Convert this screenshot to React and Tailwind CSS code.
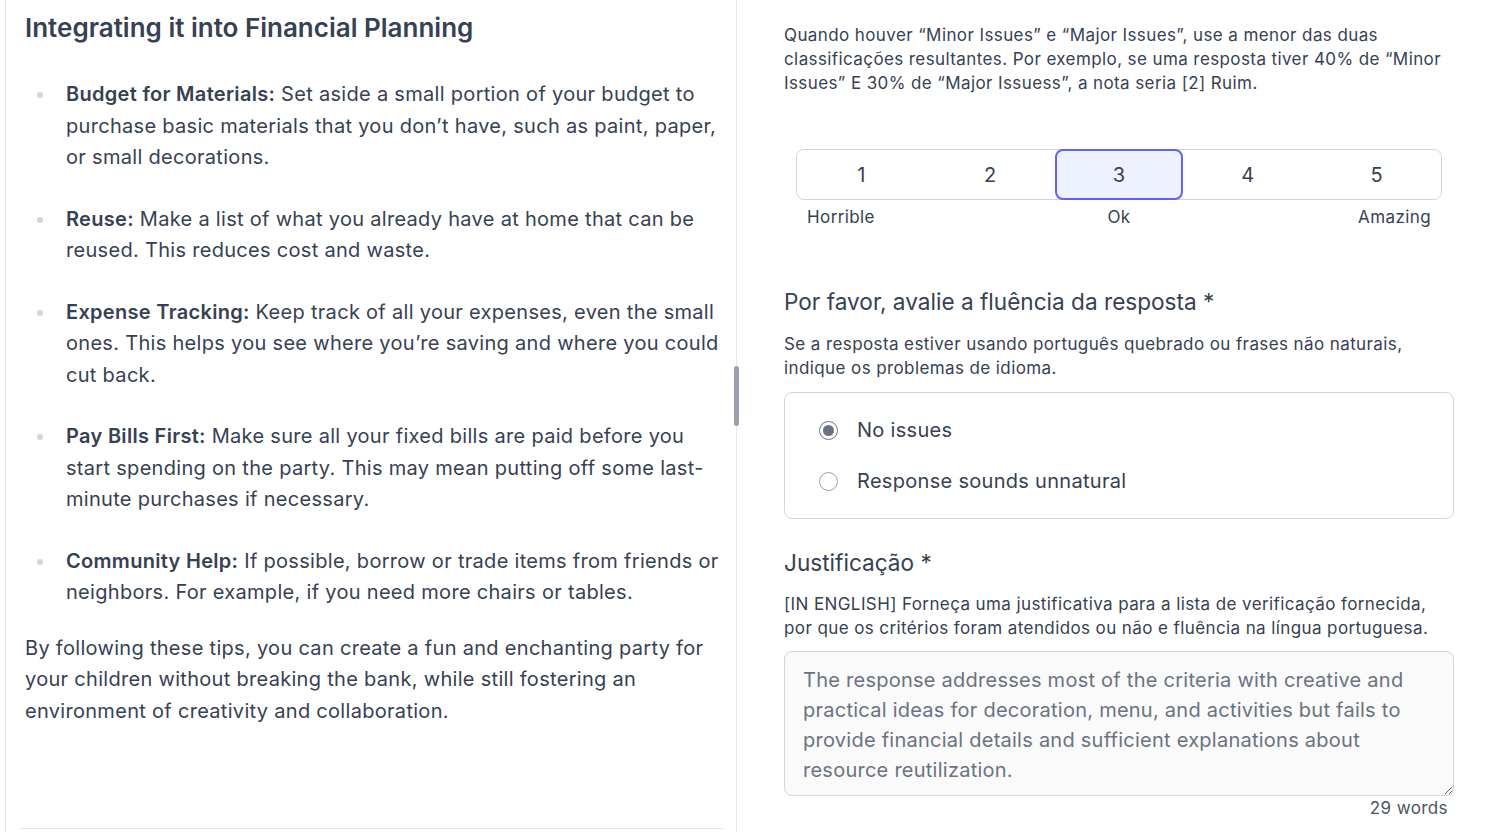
import React from "react";

const tips = [
  {
    title: "Budget for Materials:",
    body: " Set aside a small portion of your budget to purchase basic materials that you don’t have, such as paint, paper, or small decorations.",
  },
  {
    title: "Reuse:",
    body: " Make a list of what you already have at home that can be reused. This reduces cost and waste.",
  },
  {
    title: "Expense Tracking:",
    body: " Keep track of all your expenses, even the small ones. This helps you see where you’re saving and where you could cut back.",
  },
  {
    title: "Pay Bills First:",
    body: " Make sure all your fixed bills are paid before you start spending on the party. This may mean putting off some last-minute purchases if necessary.",
  },
  {
    title: "Community Help:",
    body: " If possible, borrow or trade items from friends or neighbors. For example, if you need more chairs or tables.",
  },
];

const Radio = ({ checked, label }) => (
  <label className="flex items-center gap-[19px] cursor-pointer">
    <span
      className={`w-[19px] h-[19px] rounded-full border flex items-center justify-center ${
        checked ? "border-gray-500" : "border-gray-400"
      }`}
    >
      {checked && <span className="w-[11px] h-[11px] rounded-full bg-gray-500" />}
    </span>
    <span className="text-[20px] leading-[24px] tracking-[0.3px] text-gray-700">{label}</span>
  </label>
);

export default function App() {
  const [rating, setRating] = React.useState(3);

  return (
    <div
      className="w-[1486px] h-[832px] overflow-hidden bg-white flex text-gray-700"
      style={{ fontFamily: "Inter, 'Noto Sans', sans-serif" }}
    >
      {/* left: response content */}
      <div className="relative ml-[5px] w-[732px] h-full border-x border-gray-200 flex flex-col">
        <div className="flex-1 overflow-hidden pl-[19px] pr-[14px]">
          <h3 className="text-[26px] font-semibold leading-[32px] mt-[12px] text-gray-700">
            Integrating it into Financial Planning
          </h3>
          <ul className="mt-[35px] flex flex-col gap-[30px]">
            {tips.map((t) => (
              <li key={t.title} className="flex text-[20px] leading-[31.5px] tracking-[0.3px]">
                <span className="w-[41px] shrink-0 pl-[12px] pt-[13px]">
                  <span className="block w-[6px] h-[6px] rounded-full bg-gray-300" />
                </span>
                <p>
                  <strong className="font-semibold">{t.title}</strong>
                  {t.body}
                </p>
              </li>
            ))}
          </ul>
          <p className="mt-[24px] text-[20px] leading-[31.5px] tracking-[0.3px]">
            By following these tips, you can create a fun and enchanting party for your children without
            breaking the bank, while still fostering an environment of creativity and collaboration.
          </p>
        </div>
        <div className="mx-[13px] mb-[3px] border-t border-gray-200" />
        <div className="absolute right-[-3px] top-[366px] w-[5px] h-[60px] rounded-full bg-gray-400" />
      </div>

      {/* right: evaluation form */}
      <div className="flex-1 pl-[47px] pr-[32px] pt-[23px]">
        <p className="text-[17px] leading-[24px] tracking-[0.4px] text-gray-700">
          Quando houver “Minor Issues” e “Major Issues”, use a menor das duas classificações resultantes. Por
          exemplo, se uma resposta tiver 40% de “Minor Issues” E 30% de “Major Issuess”, a nota seria [2] Ruim.
        </p>

        <div className="mt-[54px] mx-[12px]">
          <div className="flex h-[51px] border border-gray-300 rounded-[8px] items-stretch">
            {[1, 2, 3, 4, 5].map((n) => (
              <button
                key={n}
                type="button"
                onClick={() => setRating(n)}
                className={`flex-1 text-[20px] text-gray-700 rounded-[8px] -my-px ${
                  rating === n ? "bg-indigo-50 border-2 border-indigo-500" : "border-2 border-transparent"
                }`}
              >
                {n}
              </button>
            ))}
          </div>
          <div className="grid grid-cols-3 mt-[5px] text-[17px] leading-[24px] tracking-[0.4px] px-[11px]">
            <span className="text-left">Horrible</span>
            <span className="text-center">Ok</span>
            <span className="text-right">Amazing</span>
          </div>
        </div>

        <h4 className="mt-[58px] text-[22.6px] leading-[30px] text-gray-700">
          Por favor, avalie a fluência da resposta *
        </h4>
        <p className="mt-[15px] text-[17px] leading-[24px] tracking-[0.4px]">
          Se a resposta estiver usando português quebrado ou frases não naturais, indique os problemas de idioma.
        </p>
        <div className="mt-[12px] border border-gray-300 rounded-[8px] h-[127px] pl-[34px] pt-[25px] flex flex-col gap-[27px]">
          <Radio checked label="No issues" />
          <Radio label="Response sounds unnatural" />
        </div>

        <h4 className="mt-[29px] text-[22.6px] leading-[30px] text-gray-700">Justificação *</h4>
        <p className="mt-[14px] text-[17px] leading-[24px] tracking-[0.4px]">
          [IN ENGLISH] Forneça uma justificativa para a lista de verificação fornecida, por que os critérios foram
          atendidos ou não e fluência na língua portuguesa.
        </p>
        <textarea
          readOnly
          className="mt-[11px] block w-full h-[145px] bg-[#fafafa] border border-gray-300 rounded-[8px] px-[18px] pt-[13px] text-[20px] leading-[30px] tracking-[0.25px] text-gray-500 resize-y"
          value="The response addresses most of the criteria with creative and practical ideas for decoration, menu, and activities but fails to provide financial details and sufficient explanations about resource reutilization."
        />
        <div className="text-right text-[17px] leading-[24px] tracking-[0.4px] pr-[6px] text-gray-600">29 words</div>
      </div>
    </div>
  );
}
